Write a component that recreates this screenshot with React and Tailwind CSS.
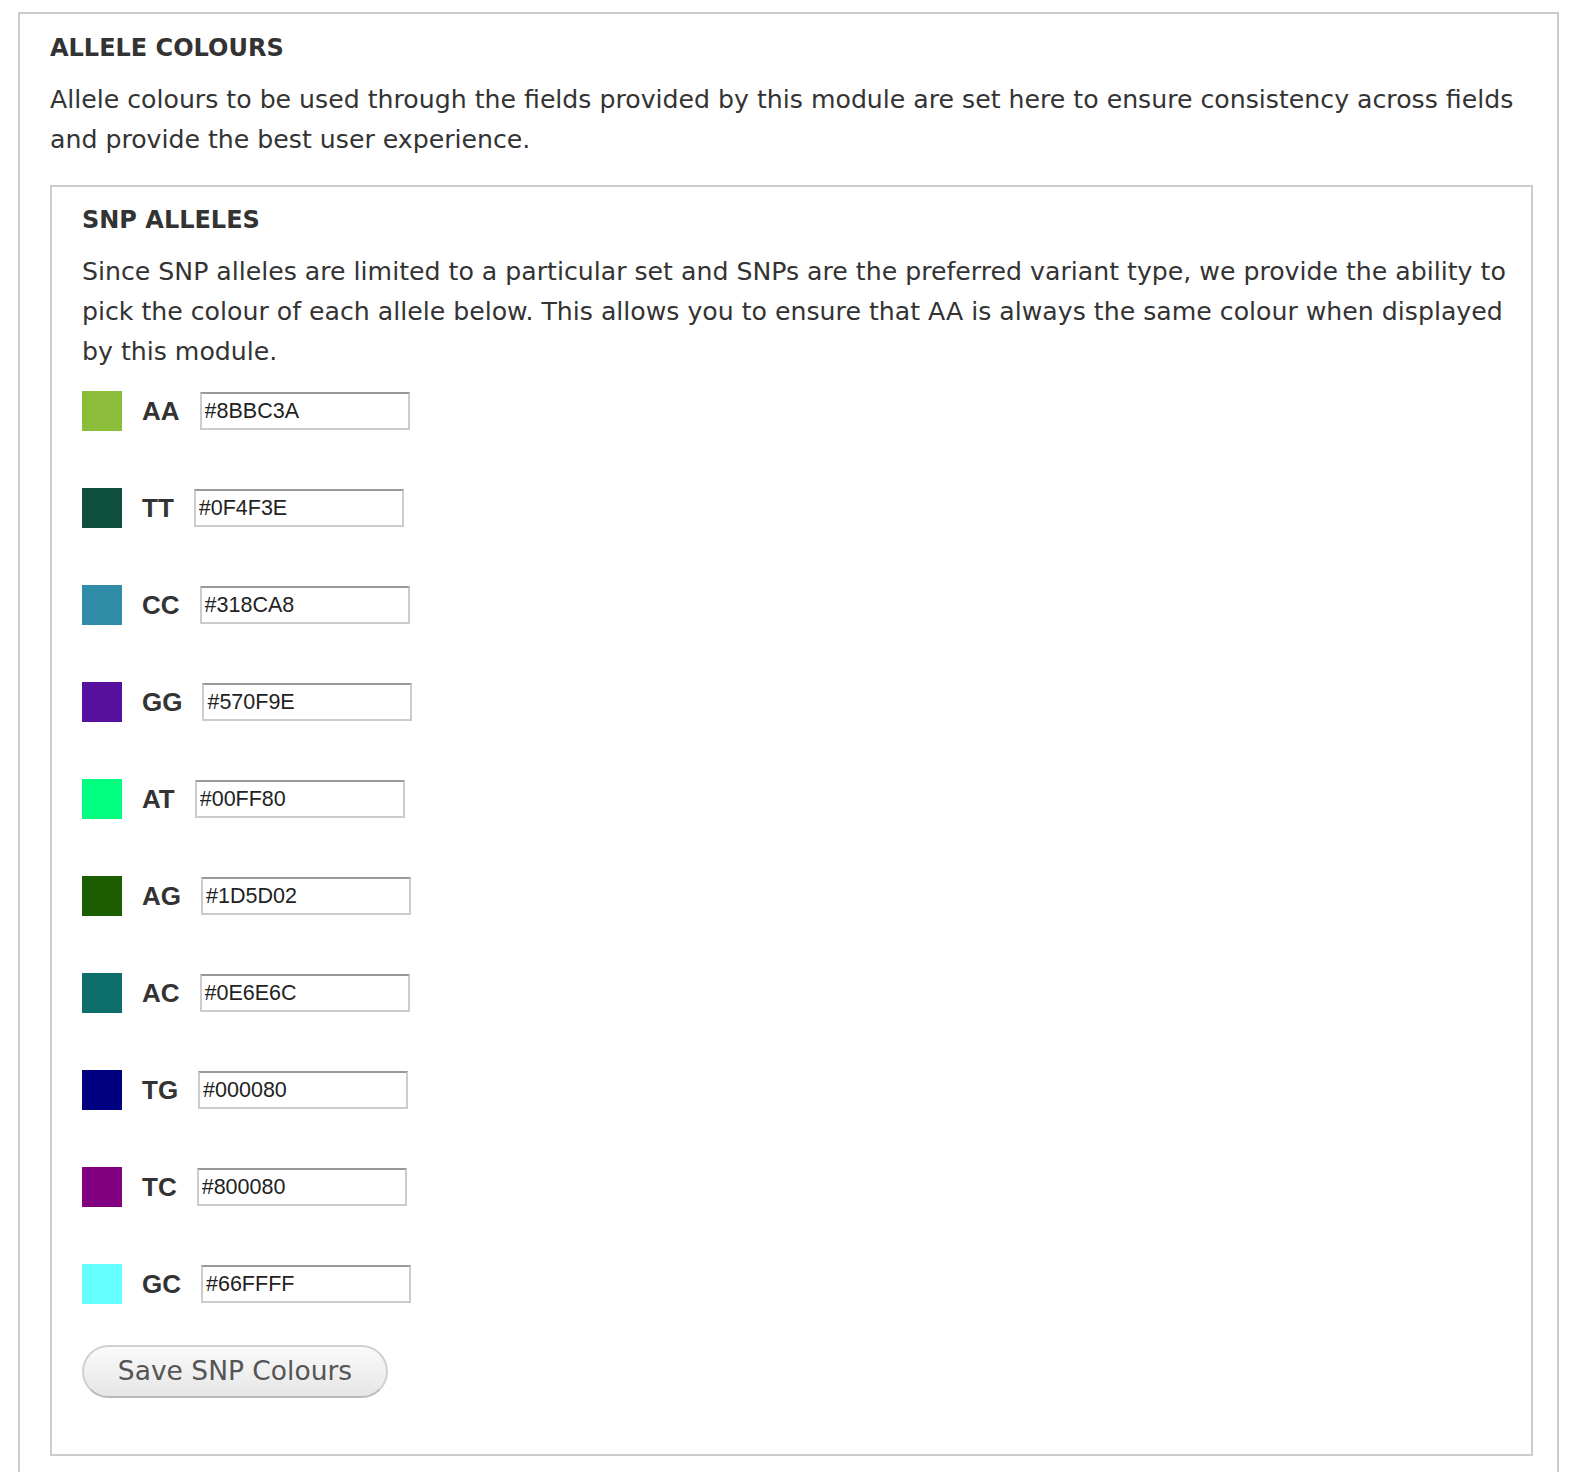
import React from 'react';

const alleles = [
  { name: 'AA', hex: '#8BBC3A', swatch: 'bg-[#8bbc3a]' },
  { name: 'TT', hex: '#0F4F3E', swatch: 'bg-[#0f4f3e]' },
  { name: 'CC', hex: '#318CA8', swatch: 'bg-[#318ca8]' },
  { name: 'GG', hex: '#570F9E', swatch: 'bg-[#570f9e]' },
  { name: 'AT', hex: '#00FF80', swatch: 'bg-[#00ff80]' },
  { name: 'AG', hex: '#1D5D02', swatch: 'bg-[#1d5d02]' },
  { name: 'AC', hex: '#0E6E6C', swatch: 'bg-[#0e6e6c]' },
  { name: 'TG', hex: '#000080', swatch: 'bg-[#000080]' },
  { name: 'TC', hex: '#800080', swatch: 'bg-[#800080]' },
  { name: 'GC', hex: '#66FFFF', swatch: 'bg-[#66ffff]' },
];

function AlleleRow({ allele }) {
  return (
    <div className="flex items-center h-10">
      <div className={`w-10 h-10 ${allele.swatch}`} />
      <span className="ml-5 mr-[20px] text-[26px] font-bold text-[#333] font-['Liberation_Sans',Arial,sans-serif]">
        {allele.name}
      </span>
      <input
        type="text"
        defaultValue={allele.hex}
        className="w-[210px] h-[38px] px-[3px] border-2 border-[#ccc] border-t-[#999] bg-white text-[21.5px] text-[#222] font-['Liberation_Sans',Arial,sans-serif] outline-none"
      />
    </div>
  );
}

export default function App() {
  return (
    <div className="w-[1582px] h-[1472px] overflow-hidden bg-white text-[#333] font-['DejaVu_Sans',sans-serif]">
      <div className="ml-[18px] mt-[12px] w-[1541px] h-[1470px] border-2 border-b-0 border-[#ccc] pl-[30px] pt-[16px]">
        <h2 className="text-[24px] font-bold leading-[36px] uppercase">Allele Colours</h2>
        <p className="mt-[14px] text-[25.2px] leading-[40px] pr-[20px]">
          Allele colours to be used through the fields provided by this module are set here to ensure consistency across fields and provide the best user experience.
        </p>

        <div className="mt-[25px] w-[1483px] h-[1271px] border-2 border-[#ccc] pl-[30px] pt-[15px]">
          <h3 className="text-[24px] font-bold leading-[36px] uppercase">SNP Alleles</h3>
          <p className="mt-[14px] text-[25.2px] leading-[40px] pr-[20px]">
            Since SNP alleles are limited to a particular set and SNPs are the preferred variant type, we provide the ability to pick the colour of each allele below. This allows you to ensure that AA is always the same colour when displayed by this module.
          </p>

          <div className="mt-[19px] flex flex-col gap-[57px]">
            {alleles.map((a) => (
              <AlleleRow key={a.name} allele={a} />
            ))}
          </div>

          <button className="mt-[41px] w-[306px] h-[53px] rounded-full border-2 border-[#d0d0d0] border-b-[#bbb] bg-gradient-to-b from-[#fafafa] to-[#e6e6e6] text-[26.5px] text-[#555] pb-[2px]">
            Save SNP Colours
          </button>
        </div>
      </div>
    </div>
  );
}
